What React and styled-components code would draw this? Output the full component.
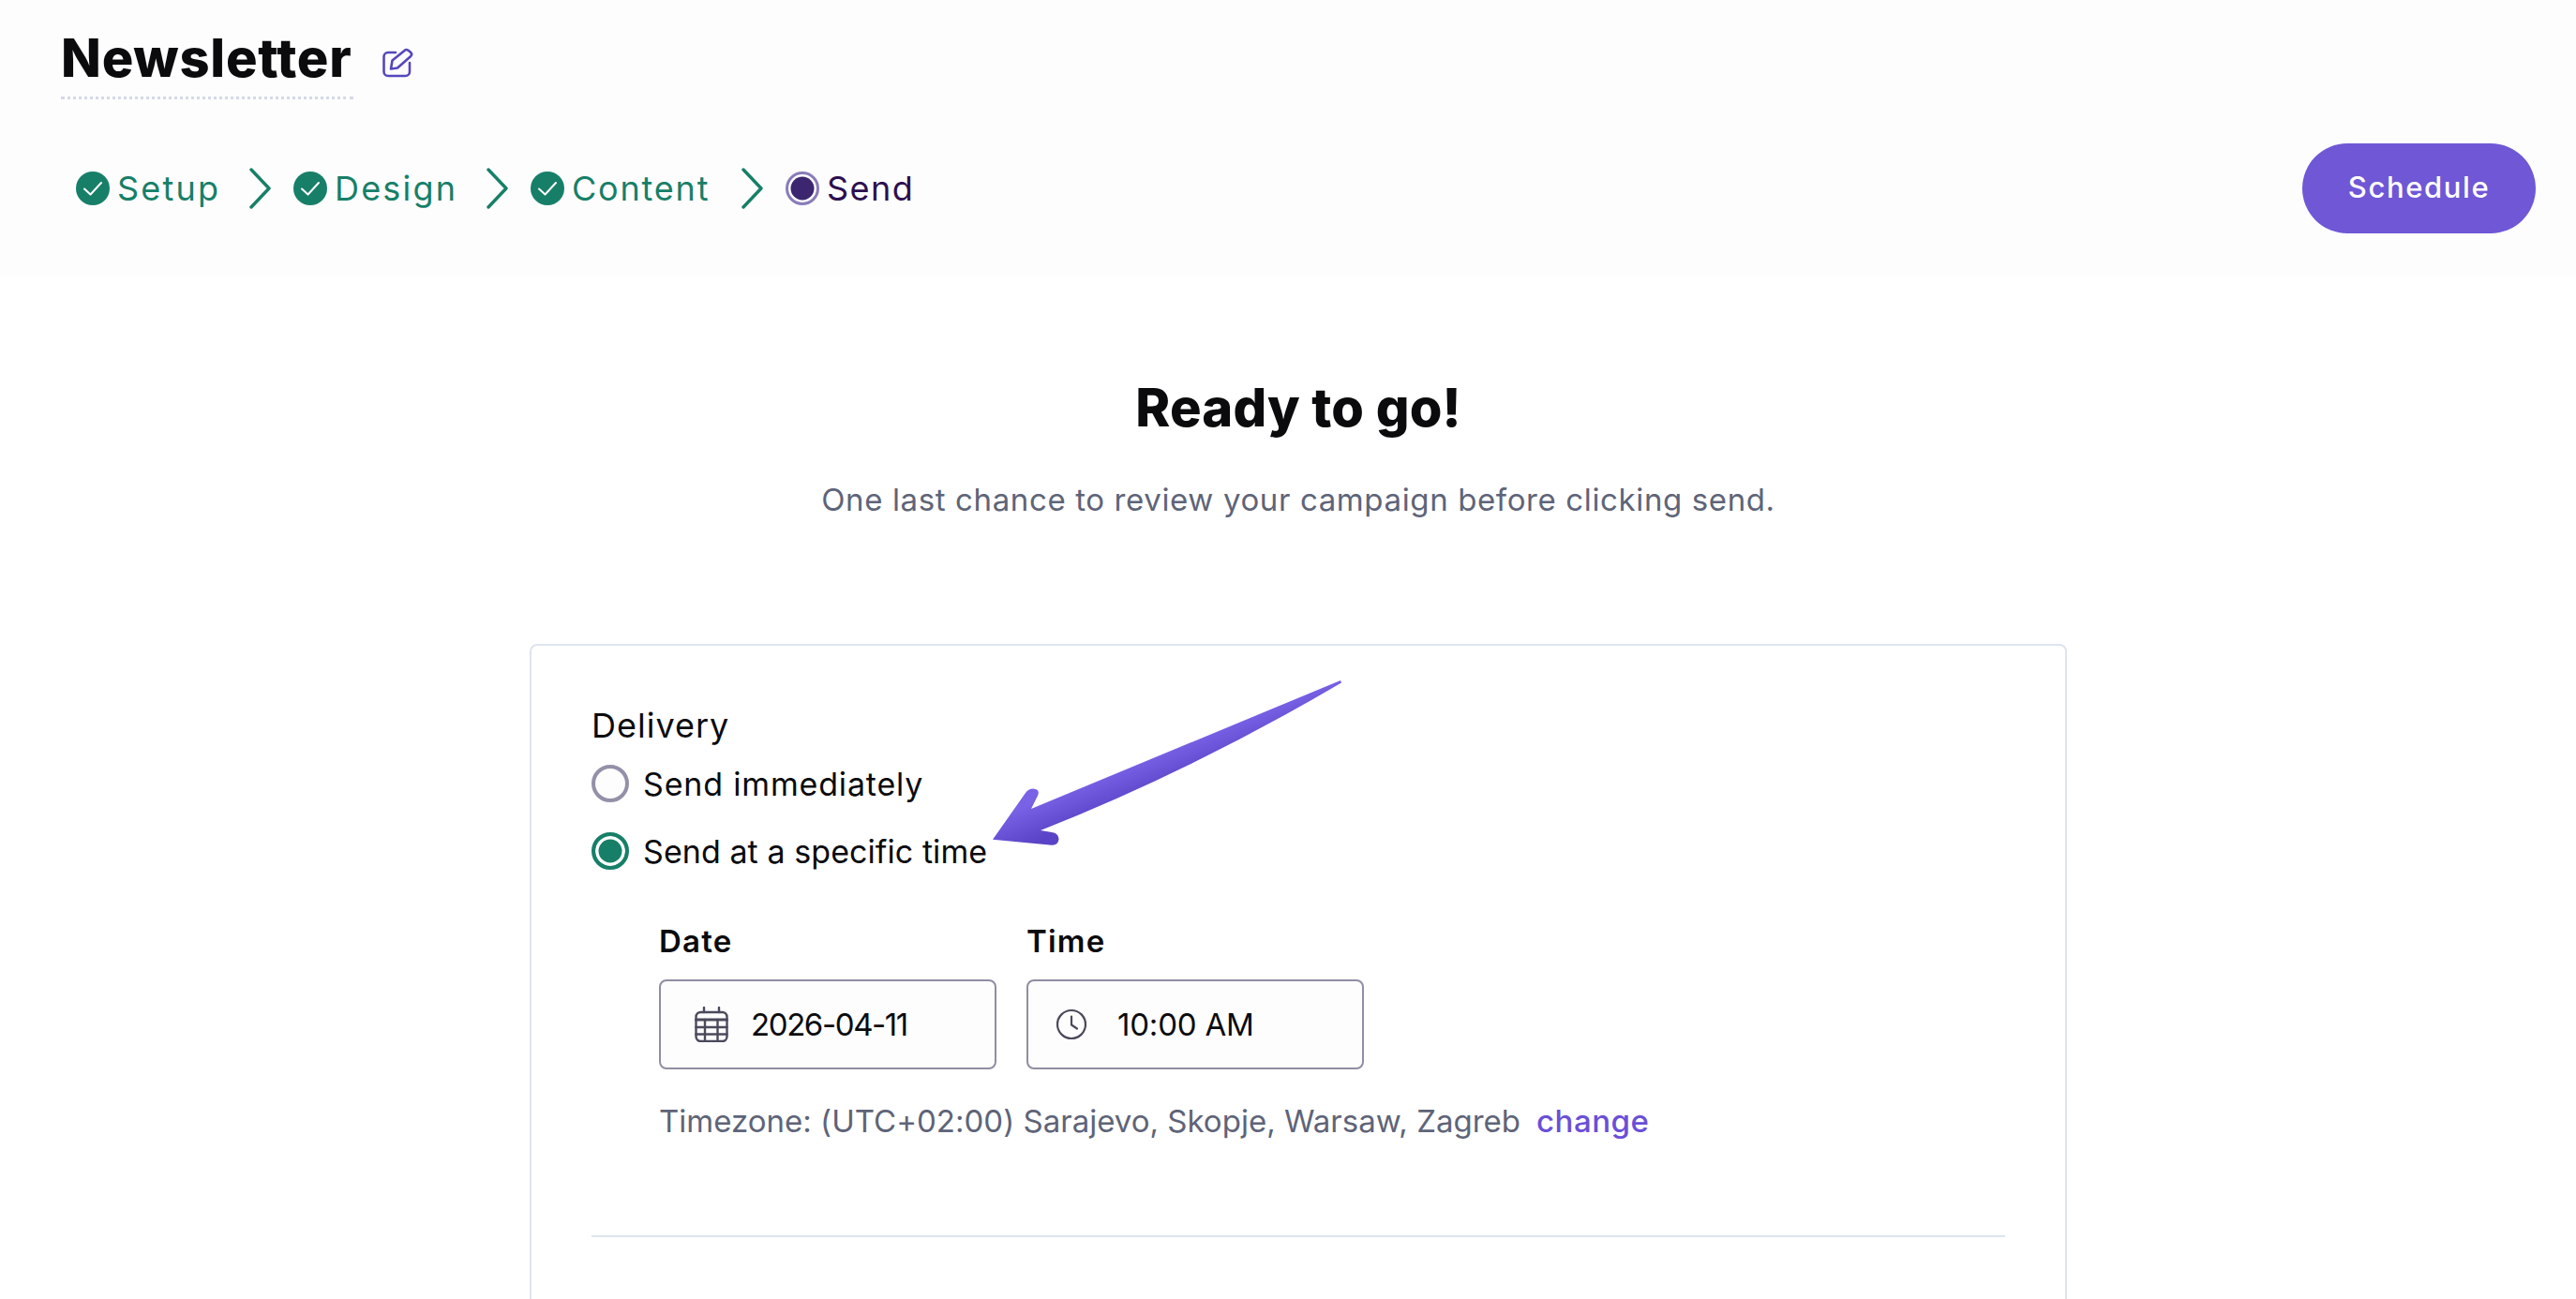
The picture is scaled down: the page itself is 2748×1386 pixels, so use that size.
import React from "react";
import styled, { createGlobalStyle } from "styled-components";

const Global = createGlobalStyle`
  html, body { margin: 0; padding: 0; background: #fff; height: 100%; overflow: hidden; }
  body { font-family: Inter, "Liberation Sans", sans-serif; color: #0b0b0d; }
`;

const Page = styled.div`
  position: relative;
  width: 2748px;
  height: 1386px;
  overflow: hidden;
`;

const Header = styled.header`
  height: 295px;
  box-sizing: border-box;
  background: #fdfdfe;
  padding: 31px 43px 0 65px;
`;

const TitleRow = styled.div`
  display: flex;
  align-items: flex-start;
  gap: 31px;
`;

const TitleWrap = styled.div`
  width: 312px;
  height: 72px;
  border-bottom: 3px dotted #d3d9e8;
`;

const Title = styled.h1`
  margin: 0;
  font-size: 56px;
  line-height: 62px;
  font-weight: 800;
  letter-spacing: 0.75px;
  color: #0b0b0d;
  white-space: nowrap;
`;

const EditButton = styled.span`
  display: block;
  margin-top: 21px;
  width: 33px;
  height: 32px;
`;

const BarRow = styled.div`
  display: flex;
  align-items: center;
  justify-content: space-between;
  margin-top: 47px;
  padding-left: 16px;
`;

const Steps = styled.nav`
  display: flex;
  align-items: center;
`;

const Step = styled.div`
  display: flex;
  align-items: center;
  gap: 8px;
  width: ${(p) => p.$w}px;
  font-size: 36px;
  line-height: 42px;
  letter-spacing: ${(p) => p.$ls}px;
  color: ${(p) => (p.$active ? "#2c0f4f" : "#177f68")};
  white-space: nowrap;
`;

const Separator = styled.svg`
  display: block;
  width: 24px;
  height: 44px;
  margin-right: 23px;
  flex: none;
`;

const ScheduleButton = styled.button`
  width: 249px;
  height: 96px;
  border: 0;
  border-radius: 48px;
  background: #6f57d6;
  color: #fff;
  font-family: inherit;
  font-size: 31px;
  line-height: 38px;
  padding: 0 0 2px;
  font-weight: 500;
  letter-spacing: 1.6px;
`;

const Intro = styled.section`
  display: flex;
  flex-direction: column;
  align-items: center;
  height: 392px;
  box-sizing: border-box;
  padding: 107px 0 0 22px;
`;

const Heading = styled.h2`
  margin: 0;
  font-size: 56px;
  line-height: 66px;
  font-weight: 800;
  letter-spacing: 0.2px;
  color: #0b0b0d;
`;

const Subtitle = styled.p`
  margin: 45px 0 0;
  font-size: 33px;
  line-height: 40px;
  letter-spacing: 0.62px;
  color: #5e6478;
`;

const Card = styled.section`
  width: 1640px;
  height: 800px;
  margin-left: 565px;
  box-sizing: border-box;
  background: #fff;
  border: 2px solid #dfe4f0;
  border-radius: 8px;
  padding: 63px 64px 0 64px;
`;

const SectionLabel = styled.div`
  font-size: 36px;
  line-height: 44px;
  letter-spacing: 1px;
  color: #0b0b0d;
`;

const RadioRow = styled.label`
  display: flex;
  align-items: center;
  gap: 15px;
  height: 44px;
  margin-top: ${(p) => p.$mt}px;
  font-size: 34px;
  letter-spacing: ${(p) => p.$ls}px;
  color: #0b0b0d;
`;

const Radio = styled.span`
  display: block;
  box-sizing: border-box;
  flex: none;
  width: 40px;
  height: 40px;
  border-radius: 50%;
  border: 4px solid ${(p) => (p.$checked ? "#177f68" : "#9391a8")};
  background: ${(p) => (p.$checked ? "#177f68" : "#fdfdfe")};
  box-shadow: ${(p) => (p.$checked ? "inset 0 0 0 3.5px #fff" : "none")};
`;

const Schedule = styled.div`
  padding-left: 72px;
  margin-top: 54px;
`;

const Fields = styled.div`
  display: flex;
  gap: 32px;
`;

const Field = styled.div`
  width: 360px;
`;

const FieldLabel = styled.div`
  font-size: 33px;
  line-height: 40px;
  font-weight: 600;
  letter-spacing: 1.2px;
  color: #0b0b0d;
`;

const InputBox = styled.div`
  display: flex;
  align-items: center;
  box-sizing: border-box;
  width: 360px;
  height: 96px;
  margin-top: 21px;
  padding-left: ${(p) => p.$pad}px;
  gap: ${(p) => p.$gap}px;
  background: #fdfdfe;
  border: 2px solid #8f8ea3;
  border-radius: 8px;
  font-size: 33px;
  letter-spacing: ${(p) => p.$ls}px;
  color: #0b0b0d;
`;

const Timezone = styled.div`
  display: flex;
  gap: 17px;
  margin-top: 35px;
  font-size: 33px;
  line-height: 40px;
  letter-spacing: 0.01px;
  color: #5e6478;
  white-space: nowrap;
`;

const ChangeLink = styled.a`
  color: #6a4fd8;
  font-weight: 500;
  letter-spacing: 0.5px;
`;

const Divider = styled.hr`
  margin: 102px 0 0;
  border: 0;
  height: 2px;
  background: #dfe4f0;
`;

const ArrowArt = styled.svg`
  position: absolute;
  left: 0;
  top: 0;
  width: 2748px;
  height: 1386px;
  pointer-events: none;
`;

const CheckIcon = () => (
  <svg width="36" height="36" viewBox="0 0 36 36" style={{ flex: "none", display: "block" }}>
    <circle cx="18" cy="18" r="18" fill="#177f68" />
    <path d="M9 18.5l6.5 6L27 12" fill="none" stroke="#fff" strokeWidth="2" strokeLinecap="round" strokeLinejoin="round" />
  </svg>
);

const ActiveIcon = () => (
  <svg width="36" height="36" viewBox="0 0 36 36" style={{ flex: "none", display: "block" }}>
    <circle cx="18" cy="18" r="16.5" fill="#fff" stroke="#8a7cb8" strokeWidth="3" />
    <circle cx="18" cy="18" r="12.5" fill="#3d2670" />
  </svg>
);

const Chevron = () => (
  <Separator viewBox="0 0 24 44">
    <path d="M2 2l19 20L2 42" fill="none" stroke="#177f68" strokeWidth="3.4" strokeLinecap="round" strokeLinejoin="round" />
  </Separator>
);

const PencilIcon = () => (
  <svg width="33" height="32" viewBox="0 0 33 32" fill="none" stroke="#5547bd" strokeWidth="2.6" strokeLinecap="round" strokeLinejoin="round" style={{ display: "block", overflow: "visible" }}>
    <path d="M14 4H6a4.5 4.5 0 0 0-4.5 4.5v16A4.5 4.5 0 0 0 6 29h18.500a4.500 4.500 0 0 0 4.500-4.500V15" />
    <path d="M9 21.500l1.500-9L23.500 2a3 3 0 0 1 4-.2l2.500 2a3 3 0 0 1 .2 4.200L16 20.500z" />
  </svg>
);

const CalendarIcon = () => (
  <svg width="36" height="38" viewBox="0 0 36 38" fill="none" stroke="#4a4a5c" strokeWidth="2.4" strokeLinecap="round" strokeLinejoin="round" style={{ flex: "none" }}>
    <path d="M10 1v5M26 1v5" />
    <rect x="1.500" y="6" width="33" height="31" rx="5" />
    <path d="M1.500 14h33" strokeWidth="3" />
    <path d="M1.500 22h33M1.500 29.500h33M11 14v23M24.500 14v23" />
  </svg>
);

const ClockIcon = () => (
  <svg width="34" height="34" viewBox="0 0 34 34" fill="none" stroke="#4a4a5c" strokeWidth="2.2" strokeLinecap="round" strokeLinejoin="round" style={{ flex: "none" }}>
    <circle cx="17" cy="17" r="15" />
    <path d="M17 8.500v9l6 4" />
  </svg>
);

const Arrow = () => (
  <ArrowArt viewBox="0 0 2748 1386">
    <defs>
      <linearGradient id="arrowFill" x1="1105" y1="855" x2="1120" y2="892" gradientUnits="userSpaceOnUse">
        <stop offset="0" stopColor="#7a62e6" />
        <stop offset="1" stopColor="#5a43c6" />
      </linearGradient>
    </defs>
    <path
      fill="url(#arrowFill)"
      d="M1430 726 L1100 863 L1107 849 Q1110 842 1102 841.500 Q1097 841.500 1094 846 L1059 895.700 L1122 901.700 Q1129 902 1129.500 895 Q1129 889 1122 888 L1110 886 Q1270 823 1431 728.500 Z"
    />
  </ArrowArt>
);

export default function App() {
  return (
    <Page>
      <Global />
      <Header>
        <TitleRow>
          <TitleWrap>
            <Title>Newsletter</Title>
          </TitleWrap>
          <EditButton>
            <PencilIcon />
          </EditButton>
        </TitleRow>
        <BarRow>
          <Steps>
            <Step $w={185} $ls={2.2}><CheckIcon />Setup</Step>
            <Chevron />
            <Step $w={206} $ls={2.2}><CheckIcon />Design</Step>
            <Chevron />
            <Step $w={225} $ls={1.8}><CheckIcon />Content</Step>
            <Chevron />
            <Step $w={140} $ls={1.5} $active><ActiveIcon />Send</Step>
          </Steps>
          <ScheduleButton>Schedule</ScheduleButton>
        </BarRow>
      </Header>
      <Intro>
        <Heading>Ready to go!</Heading>
        <Subtitle>One last chance to review your campaign before clicking send.</Subtitle>
      </Intro>
      <Card>
        <SectionLabel>Delivery</SectionLabel>
        <RadioRow $mt={18} $ls={0.83}><Radio />Send immediately</RadioRow>
        <RadioRow $mt={28} $ls={0.07}><Radio $checked />Send at a specific time</RadioRow>
        <Schedule>
          <Fields>
            <Field>
              <FieldLabel>Date</FieldLabel>
              <InputBox $pad={36} $gap={24} $ls={-1.4}><CalendarIcon />2026-04-11</InputBox>
            </Field>
            <Field>
              <FieldLabel>Time</FieldLabel>
              <InputBox $pad={29} $gap={32} $ls={-0.2}><ClockIcon />10:00 AM</InputBox>
            </Field>
          </Fields>
          <Timezone>
            <span>Timezone: (UTC+02:00) Sarajevo, Skopje, Warsaw, Zagreb</span>
            <ChangeLink>change</ChangeLink>
          </Timezone>
        </Schedule>
        <Divider />
      </Card>
      <Arrow />
    </Page>
  );
}
